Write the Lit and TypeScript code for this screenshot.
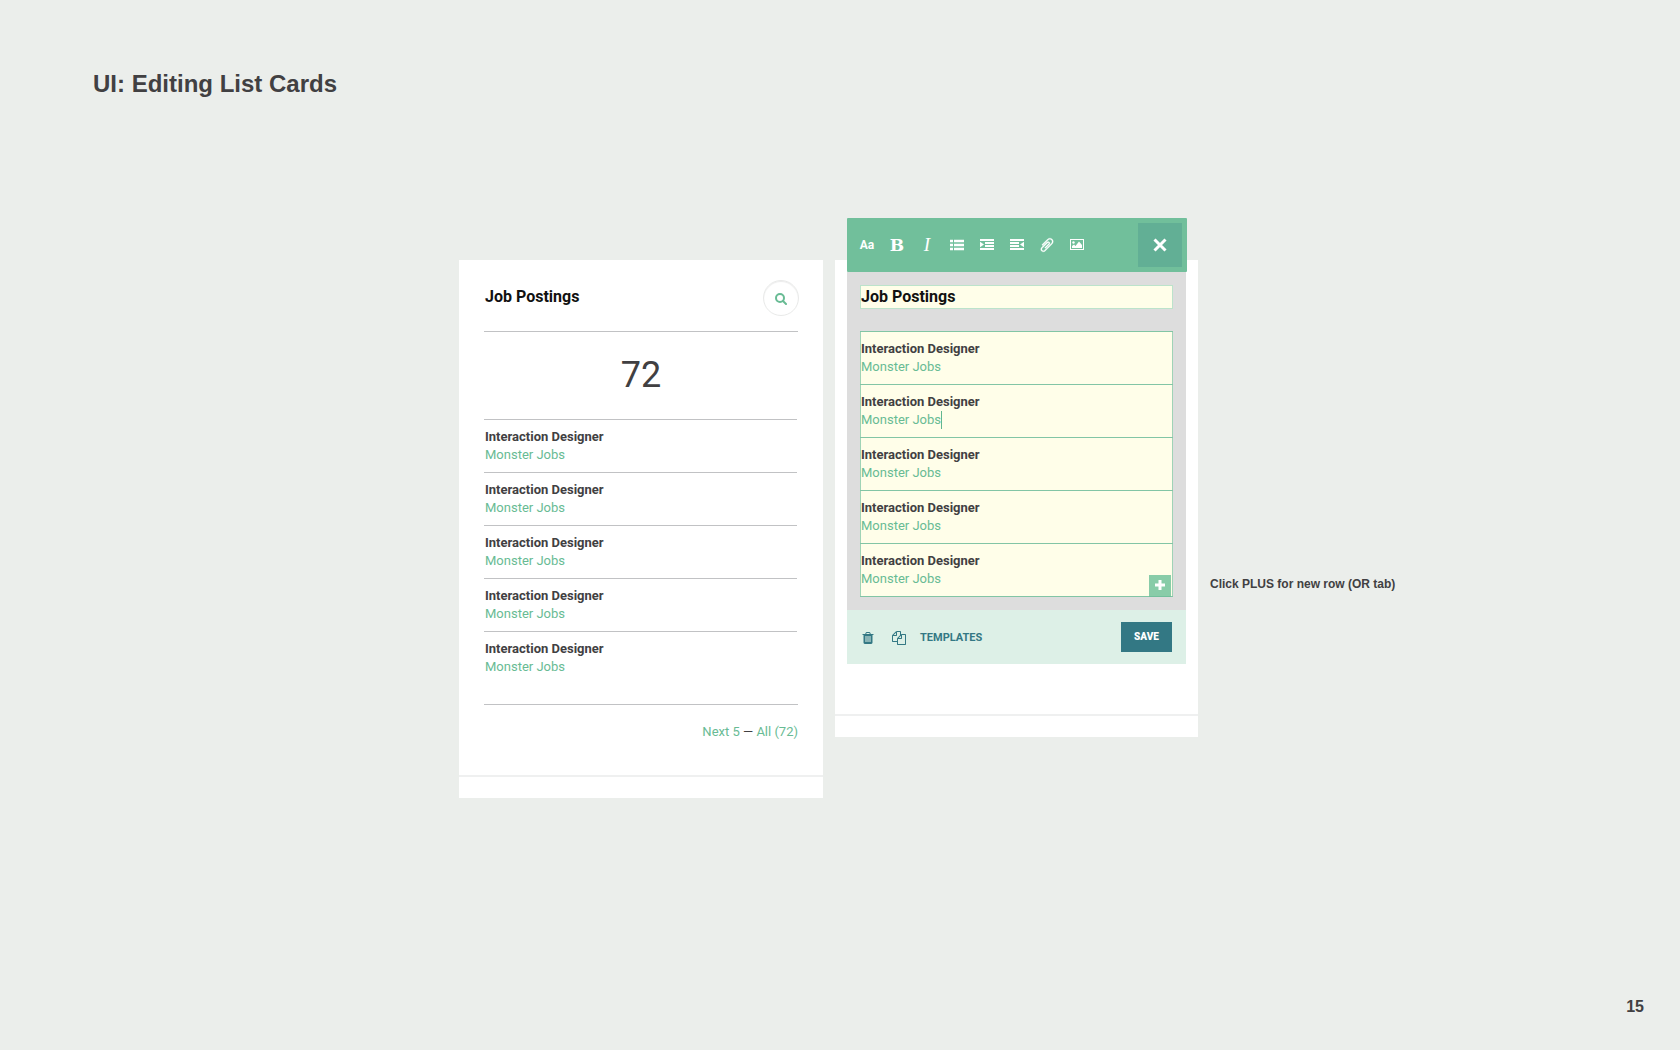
import { LitElement, html, svg, css, nothing } from "lit";
import { customElement, property } from "lit/decorators.js";

interface Job {
  role: string;
  source: string;
  active?: boolean;
}

const JOBS: Job[] = [
  { role: "Interaction Designer", source: "Monster Jobs" },
  { role: "Interaction Designer", source: "Monster Jobs", active: true },
  { role: "Interaction Designer", source: "Monster Jobs" },
  { role: "Interaction Designer", source: "Monster Jobs" },
  { role: "Interaction Designer", source: "Monster Jobs" },
];

const icons = {
  search: svg`<svg viewBox="0 0 12 12" width="12" height="12" fill="none" stroke="currentColor" stroke-width="2"><circle cx="5" cy="5" r="4"/><path d="M8 8l3 3" stroke-linecap="round"/></svg>`,
  list: svg`<svg viewBox="0 0 14 12" width="14" height="12" fill="currentColor"><path d="M0 .8h3v2.400H0zM4 .8h10v2.400H4zM0 4.800h3v2.400H0zM4 4.800h10v2.400H4zM0 8.800h3v2.400H0zM4 8.800h10v2.400H4z"/></svg>`,
  indent: svg`<svg viewBox="0 0 14 12" width="14" height="12" fill="currentColor"><path d="M0 0h14v2H0zM5 3h9v2H5zM5 6h9v2H5zM0 9h14v2H0zM0 2.800l4 2.700L0 8.200z"/></svg>`,
  outdent: svg`<svg viewBox="0 0 14 12" width="14" height="12" fill="currentColor"><path d="M0 0h14v2H0zM0 3h9v2H0zM0 6h9v2H0zM0 9h14v2H0zM14 2.800l-4 2.700L14 8.200z"/></svg>`,
  clip: svg`<svg viewBox="0 0 1792 1792" width="16" height="16" fill="currentColor" stroke="currentColor" stroke-width="30"><path transform="translate(1792 0) scale(-1 1)" d="M1596 1385q0 117-79 196t-196 79q-135 0-235-100l-777-776q-113-115-113-271 0-159 110-270t269-111q158 0 273 113l605 606q10 10 10 22 0 16-30.500 46.500t-46.500 30.500q-13 0-23-10l-606-607q-79-77-181-77-106 0-179 75t-73 181q0 105 76 181l776 777q63 63 145 63 64 0 106-42t42-106q0-82-63-145l-581-581q-26-24-60-24-29 0-48 19t-19 48q0 32 25 59l410 410q10 10 10 22 0 16-31 47t-47 31q-12 0-22-10l-410-410q-63-61-63-149 0-82 57-139t139-57q88 0 149 63l581 581q100 98 100 235z"/></svg>`,
  image: svg`<svg viewBox="0 0 14 12" width="14" height="12" fill="currentColor"><path fill-rule="evenodd" d="M0 0h14v11H0zM1 1v9h12V1z"/><circle cx="3.500" cy="3.500" r="1.200"/><path d="M2 9V7l2-1.500L5.500 7 9 2.500 12 6v3z"/></svg>`,
  close: svg`<svg viewBox="0 0 14 14" width="14" height="14" fill="none" stroke="currentColor" stroke-width="3"><path d="M1.500 1.500l11 11M12.500 1.500l-11 11"/></svg>`,
  plus: svg`<svg viewBox="0 0 10 10" width="10" height="10" fill="currentColor"><path d="M3.500 0h3v3.500H10v3H6.500V10h-3V6.500H0v-3h3.500z"/></svg>`,
  trash: svg`<svg viewBox="0 0 1792 1792" width="14" height="14" fill="currentColor"><path d="M704 1376v-704q0-14-9-23t-23-9h-64q-14 0-23 9t-9 23v704q0 14 9 23t23 9h64q14 0 23-9t9-23zm256 0v-704q0-14-9-23t-23-9h-64q-14 0-23 9t-9 23v704q0 14 9 23t23 9h64q14 0 23-9t9-23zm256 0v-704q0-14-9-23t-23-9h-64q-14 0-23 9t-9 23v704q0 14 9 23t23 9h64q14 0 23-9t9-23zm-544-992h448l-48-117q-7-9-17-11h-317q-10 2-17 11zm928 32v64q0 14-9 23t-23 9h-96v948q0 83-47 143.500t-113 60.500h-832q-66 0-113-58.500t-47-141.500v-952h-96q-14 0-23-9t-9-23v-64q0-14 9-23t23-9h309l70-167q15-37 54-63t79-26h320q40 0 79 26t54 63l70 167h309q14 0 23 9t9 23z"/></svg>`,
  copy: svg`<svg viewBox="0 0 1792 1792" width="14" height="14" fill="currentColor"><path d="M1696 384q40 0 68 28t28 68v1216q0 40-28 68t-68 28h-960q-40 0-68-28t-28-68v-288h-544q-40 0-68-28t-28-68v-672q0-40 20-88t48-76l408-408q28-28 76-48t88-20h416q40 0 68 28t28 68v328q68-40 128-40h416zm-544 213l-299 299h299v-299zm-640-384l-299 299h299v-299zm196 647l316-316v-416h-384v416q0 40-28 68t-68 28h-416v640h512v-256q0-40 20-88t48-76zm956 804v-1152h-384v416q0 40-28 68t-68 28h-416v640h896z"/></svg>`,
};

const controls = css`
  * {
    box-sizing: border-box;
  }
  button,
  input {
    margin: 0;
    padding: 0;
    border: 0;
    border-radius: 0;
    background: none;
    color: inherit;
    font: inherit;
  }
  button {
    display: flex;
    align-items: center;
    justify-content: center;
    cursor: pointer;
  }
  svg {
    display: block;
    flex: none;
  }
`;

@customElement("job-card")
class JobCard extends LitElement {
  @property({ attribute: false }) jobs: Job[] = [];

  static styles = [
    controls,
    css`
      :host {
        display: block;
        background: #fff;
        color: #414042;
        font: 13px/18px Roboto, sans-serif;
      }
      .body {
        padding: 20px 25px 34px;
      }
      .head {
        display: flex;
        justify-content: space-between;
        padding: 0 0 15px 1px;
        border-bottom: 1px solid #c1c2c4;
      }
      .title {
        margin: 0;
        padding-top: 7px;
        color: #111;
        font-size: 16px;
        line-height: 20px;
        font-weight: 700;
      }
      .search {
        width: 36px;
        height: 36px;
        margin-right: -1px;
        padding-top: 2px;
        border: 1px solid #e9eae9;
        border-radius: 50%;
        box-shadow: inset 0 1px 1px #ececec;
        color: #68bb94;
      }
      .count {
        padding: 21px 0 22px;
        font-size: 36px;
        line-height: 44px;
        text-align: center;
      }
      .rows {
        margin: 0 1px 20px 0;
        padding: 0;
        list-style: none;
      }
      .row {
        padding: 8px 1px;
        border-top: 1px solid #c1c2c4;
      }
      .role {
        font-weight: 700;
      }
      .source,
      .link {
        color: #68bb94;
        text-decoration: none;
      }
      .pager {
        padding-top: 18px;
        border-top: 1px solid #c1c2c4;
        text-align: right;
      }
      .base {
        height: 23px;
        border-top: 2px solid #eff0f0;
      }
    `,
  ];

  render() {
    return html`
      <div class="body">
        <div class="head">
          <h2 class="title">Job Postings</h2>
          <button class="search" aria-label="Search job postings">${icons.search}</button>
        </div>
        <div class="count">72</div>
        <ul class="rows">
          ${this.jobs.map(
            (job) => html`<li class="row">
              <div class="role">${job.role}</div>
              <div class="source">${job.source}</div>
            </li>`
          )}
        </ul>
        <nav class="pager">
          <a class="link" href="#next">Next 5</a> — <a class="link" href="#all">All (72)</a>
        </nav>
      </div>
      <div class="base"></div>
    `;
  }
}

@customElement("job-editor")
class JobEditor extends LitElement {
  @property({ attribute: false }) jobs: Job[] = [];

  static styles = [
    controls,
    css`
      :host {
        display: flow-root;
        background: #fff;
        color: #414042;
        font: 13px/18px Roboto, sans-serif;
      }
      .editor {
        margin: -42px 12px 50px;
      }
      .toolbar {
        display: flex;
        align-items: center;
        margin-right: -1px;
        padding: 5px;
        border-radius: 1px;
        background: #71bf9b;
        color: #fff;
      }
      .tool {
        width: 30px;
        height: 44px;
      }
      .case {
        font: 700 12px/18px Roboto, sans-serif;
      }
      .bold {
        font: 700 17px/20px "DejaVu Serif", serif;
      }
      .italic {
        font: italic 400 19px/20px "Liberation Serif", serif;
      }
      .close {
        width: 44px;
        height: 44px;
        margin-left: auto;
        padding-right: 1px;
        background: #62af95;
      }
      .sheet {
        padding: 13px;
        background: #ddd;
      }
      .title {
        display: block;
        width: 100%;
        height: 24px;
        margin-bottom: 22px;
        padding: 0 0 2px 1px;
        background: #fffee9;
        box-shadow: inset 0 0 0 1px #bce3cb;
        color: #111;
        font-size: 16px;
        line-height: 20px;
        font-weight: 700;
      }
      .rows {
        position: relative;
        margin: 0;
        padding: 0;
        border-bottom: 1px solid #82c5a5;
        background: #fffee9;
        box-shadow: inset 1px 0 #9fd3b6, inset -1px 0 #9fd3b6;
        list-style: none;
      }
      .row {
        padding: 8px 1px;
        border-top: 1px solid #82c5a5;
      }
      .line {
        display: flex;
        height: 18px;
      }
      .field {
        field-sizing: content;
        height: 18px;
      }
      .role {
        font-weight: 700;
      }
      .source {
        color: #68bb94;
      }
      .caret {
        width: 1px;
        height: 18px;
        background: #62b690;
      }
      .add {
        position: absolute;
        right: 2px;
        bottom: -1px;
        width: 22px;
        height: 22px;
        padding-bottom: 2px;
        border-bottom: 1px solid #71bf9b;
        background: #88cca8;
        color: #fff;
      }
      .actions {
        display: flex;
        align-items: center;
        padding: 12px 14px;
        background: #ddf0e7;
        color: #337884;
      }
      .trash {
        width: 14px;
        height: 30px;
        padding-top: 2px;
      }
      .templates {
        gap: 14px;
        height: 30px;
        margin-left: 17px;
        padding-top: 2px;
        font-size: 11px;
        font-weight: 700;
      }
      .save {
        width: 51px;
        height: 30px;
        margin-left: auto;
        background: #337884;
        color: #fff;
        font-size: 10px;
        font-weight: 900;
      }
      .base {
        height: 23px;
        border-top: 2px solid #eff0f0;
      }
    `,
  ];

  render() {
    return html`
      <div class="editor">
        <div class="toolbar" role="toolbar" aria-label="Text formatting">
          <button class="tool case" aria-label="Text style">Aa</button>
          <button class="tool bold" aria-label="Bold">B</button>
          <button class="tool italic" aria-label="Italic">I</button>
          <button class="tool" aria-label="Bulleted list">${icons.list}</button>
          <button class="tool" aria-label="Increase indent">${icons.indent}</button>
          <button class="tool" aria-label="Decrease indent">${icons.outdent}</button>
          <button class="tool" aria-label="Attach file">${icons.clip}</button>
          <button class="tool" aria-label="Insert image">${icons.image}</button>
          <button class="close" aria-label="Close editor">${icons.close}</button>
        </div>
        <div class="sheet">
          <input class="title" type="text" aria-label="Card title" .value=${"Job Postings"} />
          <ul class="rows">
            ${this.jobs.map(
              (job, i) => html`<li class="row">
                <div class="line">
                  <input class="field role" type="text" aria-label="Role ${i + 1}" .value=${job.role} />
                </div>
                <div class="line">
                  <input class="field source" type="text" aria-label="Source ${i + 1}" .value=${job.source} />
                  ${job.active ? html`<span class="caret"></span>` : nothing}
                </div>
                ${i === this.jobs.length - 1
                  ? html`<button class="add" aria-label="Add row">${icons.plus}</button>`
                  : nothing}
              </li>`
            )}
          </ul>
        </div>
        <div class="actions">
          <button class="trash" aria-label="Delete card">${icons.trash}</button>
          <button class="templates">${icons.copy}<span>TEMPLATES</span></button>
          <button class="save">SAVE</button>
        </div>
      </div>
      <div class="base"></div>
    `;
  }
}

@customElement("app-root")
class AppRoot extends LitElement {
  static styles = css`
    :host {
      display: flex;
      flex-direction: column;
      box-sizing: border-box;
      min-height: 100vh;
      padding: 69px 0 33px;
      background: #ebeeeb;
      color: #414042;
      font-family: "Liberation Sans", Arial, sans-serif;
      font-weight: 700;
    }
    .heading {
      margin: 0 0 161px;
      padding-left: 93px;
      font-size: 24px;
      line-height: 30px;
    }
    .board {
      display: grid;
      grid-template-columns: 1fr 364px 363px 1fr;
      column-gap: 12px;
      align-items: start;
      padding-right: 23px;
    }
    .preview {
      grid-column: 2;
    }
    .note {
      margin: 316px 0 0;
      font-size: 12px;
      line-height: 16px;
    }
    .page {
      margin-top: auto;
      padding-right: 36px;
      font-size: 16px;
      line-height: 20px;
      text-align: right;
    }
  `;

  render() {
    return html`
      <h1 class="heading">UI: Editing List Cards</h1>
      <main class="board">
        <job-card class="preview" .jobs=${JOBS}></job-card>
        <job-editor .jobs=${JOBS}></job-editor>
        <p class="note">Click PLUS for new row (OR tab)</p>
      </main>
      <footer class="page">15</footer>
    `;
  }
}
